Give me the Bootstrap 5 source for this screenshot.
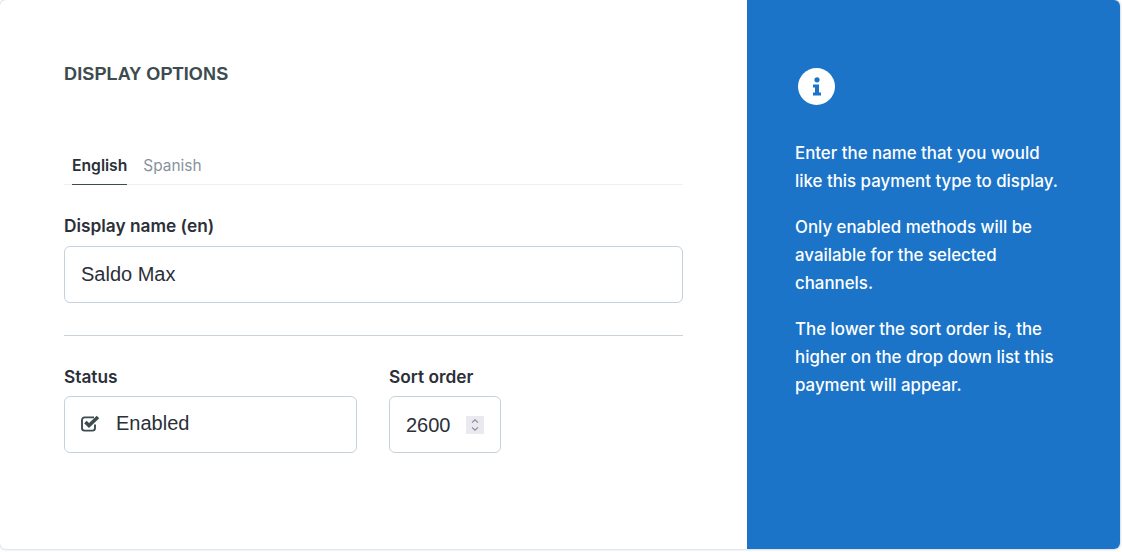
<!DOCTYPE html>
<html lang="en"><head><meta charset="utf-8"><title>Display options</title>
<link href="https://cdn.jsdelivr.net/npm/bootstrap@5.3.0/dist/css/bootstrap.min.css" rel="stylesheet">
<style>
html,body{height:552px;overflow:hidden;background:#fff}
body{font-family:Inter,"Liberation Sans",sans-serif;color:#2b2f38}
.panel-shell{width:1120px;height:549px;border-radius:6px;overflow:hidden;box-shadow:0 0 3px rgba(120,140,160,.6)}
.left-pane{width:747px;padding:64px 64px 0 64px}
.right-pane{width:373px;background:#1b74c8;color:#fff;padding:68px 56px 0 48px}
.pane-title{font-family:"Liberation Sans",sans-serif;font-weight:700;font-size:18px;line-height:20px;color:#3d4c4f;margin:0;letter-spacing:.15px}
.lang-tabs{margin-top:69px;border-bottom:1px solid #eef0f1;height:32px;padding-left:8px;gap:16px}
.lang-tab{font-size:15.4px;line-height:22px;height:32px;padding:2px 0 0;color:#87929e;text-decoration:none;display:block}
.lang-tab.on{color:#2b2f38;font-weight:600;border-bottom:1px solid #3d4c4f;font-size:15.7px}
.name-field{margin-top:30px}
.field-label{font-size:17.3px;font-weight:600;line-height:22px;margin-bottom:9px;color:#2b2f38;display:block}
.field-label.tight{margin-bottom:8px}
.field-box.form-control{height:57px;border:1px solid #c5d2dc;border-radius:6px;font-size:20px;padding:0 16px;color:#2b2f38;font-family:"Liberation Sans",sans-serif;box-shadow:none}
.sep{height:1px;background:#c9d5da;margin:32px 0 30px}
.status-box{width:293px;height:57px;border:1px solid #c5d2dc;border-radius:6px;padding:0 0 3px 16px;font-size:20px;font-family:"Liberation Sans",sans-serif;gap:16px}
.order-box{width:112px;height:57px;border:1px solid #c5d2dc;border-radius:6px;padding:0 16px}
.order-input{width:56px;border:0;outline:0;padding:0;font-family:"Liberation Sans",sans-serif;font-size:20px;color:#2b2f38;background:transparent}
.order-input::-webkit-inner-spin-button{display:none}
.spin-box{width:18px;height:18px;margin-left:4px;background:#e9e9ef}
.info-dot{width:37px;height:37px;border-radius:50%;background:#fff;margin-left:3px;margin-bottom:34px}
.right-pane p{font-size:16.85px;line-height:28px;font-weight:500;margin:0 0 18px}
</style></head>
<body>
<div class="panel-shell d-flex">
  <div class="left-pane">
    <h2 class="pane-title">DISPLAY OPTIONS</h2>
    <div class="lang-tabs d-flex">
      <a class="lang-tab on" href="#">English</a>
      <a class="lang-tab" href="#">Spanish</a>
    </div>
    <div class="name-field">
      <label class="field-label" for="dn">Display name (en)</label>
      <input id="dn" class="form-control field-box" type="text" value="Saldo Max">
    </div>
    <div class="sep"></div>
    <div class="d-flex">
      <div class="me-4 pe-2">
        <span class="field-label tight">Status</span>
        <div class="status-box d-flex align-items-center">
          <svg width="19" height="17" viewBox="0 0 19 17" aria-hidden="true"><path d="M14 9.5V13a2.6 2.6 0 0 1-2.6 2.6H3.6A2.6 2.6 0 0 1 1 13V5a2.6 2.6 0 0 1 2.6-2.6H13" fill="none" stroke="#3d4c4f" stroke-width="1.9"/><path d="M4.4 7l3.6 3.6L17 2" fill="none" stroke="#3d4c4f" stroke-width="3.6"/></svg>
          <span>Enabled</span>
        </div>
      </div>
      <div>
        <label class="field-label tight" for="so">Sort order</label>
        <div class="order-box d-flex align-items-center">
          <input id="so" class="order-input" type="number" value="2600">
          <span class="spin-box d-flex align-items-center justify-content-center">
            <svg width="10" height="14" viewBox="0 0 10 14" aria-hidden="true"><path d="M2 4.6L5 1.8l3 2.8M2 9.4l3 2.8 3-2.8" fill="none" stroke="#8a8a92" stroke-width="1.2"/></svg>
          </span>
        </div>
      </div>
    </div>
  </div>
  <div class="right-pane">
    <div class="info-dot d-flex align-items-center justify-content-center">
      <svg width="10" height="19" viewBox="0 0 10 19" aria-hidden="true"><circle cx="5" cy="2.8" r="2.6" fill="#1b74c8"/><path d="M1 7.5h6v8h2v3H1v-3h2v-5H1z" fill="#1b74c8"/></svg>
    </div>
    <p>Enter the name that you would like this payment type to display.</p>
    <p>Only enabled methods will be available for the selected channels.</p>
    <p>The lower the sort order is, the higher on the drop down list this payment will appear.</p>
  </div>
</div>
</body></html>
